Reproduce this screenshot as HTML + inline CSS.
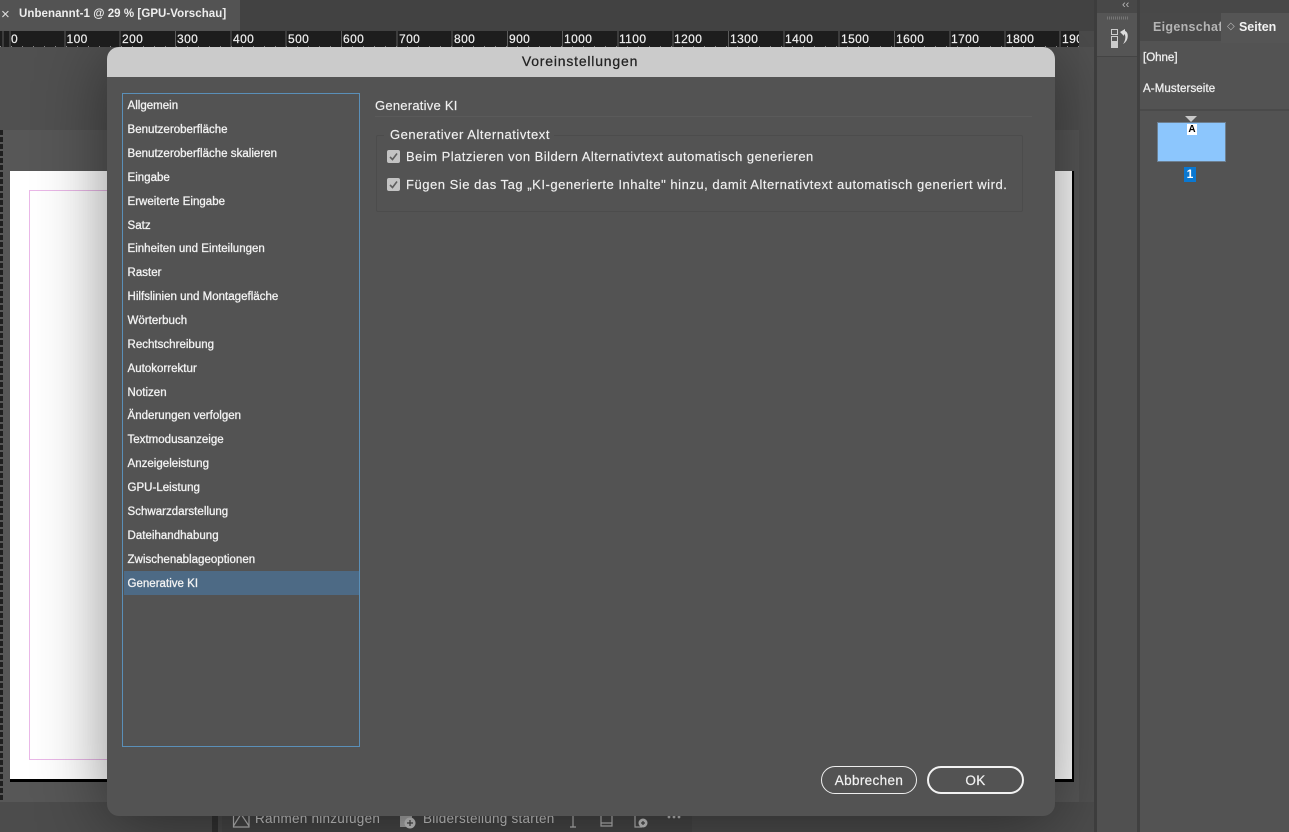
<!DOCTYPE html>
<html><head><meta charset="utf-8"><style>
html,body{margin:0;padding:0;width:1289px;height:832px;overflow:hidden;background:#4b4b4b}
body{position:relative;font-family:"Liberation Sans",sans-serif;color:#f0f0f0;-webkit-font-smoothing:antialiased}
div,span.a{position:absolute;white-space:nowrap}
.li{left:127.5px;font-size:11.5px;line-height:16px;letter-spacing:.02px;color:#f2f2f2;-webkit-text-stroke:.3px #f2f2f2}
.r{top:32px;font-size:12px;line-height:15px;color:#eee;letter-spacing:.4px;-webkit-text-stroke:.2px #eee;z-index:6}
.t{font-size:13px;line-height:18px;letter-spacing:.5px;color:#f0f0f0;-webkit-text-stroke:.15px #f0f0f0}
.cb{left:387px;width:13px;height:13px;background:#c3c3c3;border-radius:2px}
</style></head><body>
<!-- top bar -->
<div style="left:0;top:0;width:240px;height:31px;background:#535353;z-index:5"></div>
<div style="left:240px;top:0;width:855px;height:31px;background:#424242;z-index:5"></div>
<div style="left:1px;top:6px;font-size:15px;line-height:18px;color:#ddd;z-index:6">×</div>
<div style="left:19px;top:6px;font-size:11.5px;line-height:16px;font-weight:bold;letter-spacing:.06px;color:#eee;z-index:6">Unbenannt-1 @ 29 % [GPU-Vorschau]</div>
<!-- ruler -->
<div style="left:0;top:31px;width:1079px;height:16px;background:#1d1d1d;z-index:5"></div>
<svg style="position:absolute;left:0;top:31px;z-index:5" width="1080" height="16"><path d="M3 0V16M10 0V16M65 0V16M120 0V16M175.5 0V16M231 0V16M286 0V16M341.5 0V16M397 0V16M452 0V16M507.5 0V16M562.5 0V16M618 0V16M673 0V16M728.5 0V16M784 0V16M839 0V16M894.5 0V16M950 0V16M1005 0V16M1060 0V16" stroke="#5c5c5c" stroke-width="1"/><path d="M0 15.5H1079" stroke="#8a8a8a" stroke-width="1" stroke-dasharray="1 10"/></svg>
<div class="r" style="left:11px">0</div><div class="r" style="left:66.5px">100</div><div class="r" style="left:122px">200</div><div class="r" style="left:177px">300</div><div class="r" style="left:233px">400</div><div class="r" style="left:288px">500</div><div class="r" style="left:343px">600</div><div class="r" style="left:399px">700</div><div class="r" style="left:454px">800</div><div class="r" style="left:509px">900</div><div class="r" style="left:564px">1000</div><div class="r" style="left:619px">1100</div><div class="r" style="left:674px">1200</div><div class="r" style="left:730px">1300</div><div class="r" style="left:785px">1400</div><div class="r" style="left:841px">1500</div><div class="r" style="left:896px">1600</div><div class="r" style="left:951px">1700</div><div class="r" style="left:1006px">1800</div><div style="left:1062px;top:32px;width:17px;overflow:hidden;font-size:12px;line-height:15px;color:#eee;letter-spacing:.4px;-webkit-text-stroke:.2px #eee;z-index:6">1900</div>
<!-- canvas -->
<div style="left:0;top:47px;width:1095px;height:785px;background:#505050"></div>
<div style="left:0;top:130px;width:1079px;height:672px;background:#575757"></div>
<svg style="position:absolute;left:0;top:130px" width="4" height="672"><path d="M1.5 0V672" stroke="#1f1f1f" stroke-width="3" stroke-dasharray="5 2"/></svg>
<div style="left:1079px;top:47px;width:16px;height:785px;background:#515151"></div>
<div style="left:1094px;top:0;width:3px;height:832px;background:#3d3d3d;z-index:5"></div>
<div style="left:10px;top:171px;width:1064px;height:611px;background:#fff;border-right:2px solid #000;border-bottom:3px solid #000;box-sizing:border-box"></div>
<div style="left:29px;top:190px;width:200px;height:570px;border:1px solid #eab8e8;box-sizing:border-box"></div>
<div style="left:0;top:802px;width:1095px;height:30px;background:#4c4c4c"></div>
<div style="left:212px;top:802px;width:6px;height:30px;background:#333"></div>
<div style="left:222px;top:802px;width:470px;height:30px;background:#474747"></div>
<svg style="position:absolute;left:232px;top:812px" width="460" height="20" fill="none" stroke="#bbb" stroke-width="1.2"><path d="M1.5 1V15H17V1M1.5 14L9 2L17 14"/><path d="M168 4H180V15H168Z" fill="#aaa" stroke="none"/><circle cx="178" cy="11" r="5.5" fill="#ccc" stroke="none"/><path d="M178 8V14M175 11H181" stroke="#444"/><path d="M341 4V15M338 15H344"/><path d="M369 1V14H380V1M369 11H380"/><path d="M403 4V15H410"/><circle cx="411" cy="11" r="4.5" fill="#ccc" stroke="none"/><path d="M411 9V13M409 11H413" stroke="#444"/><circle cx="437" cy="5" r="1.4" fill="#bbb" stroke="none"/><circle cx="442" cy="5" r="1.4" fill="#bbb" stroke="none"/><circle cx="447" cy="5" r="1.4" fill="#bbb" stroke="none"/></svg>
<div style="left:255px;top:810px;font-size:13.5px;line-height:18px;letter-spacing:.25px;color:#ccc">Rahmen hinzufügen</div>
<div style="left:423px;top:810px;font-size:13.5px;line-height:18px;letter-spacing:.25px;color:#ccc">Bilderstellung starten</div>
<!-- dialog -->
<div style="left:107px;top:47px;width:948px;height:769px;background:#535353;border-radius:12px;overflow:hidden;box-shadow:0 8px 70px rgba(0,0,0,.45)">
  <div style="left:0;top:0;width:948px;height:30px;background:#cbcbcb"></div>
  <div style="left:-1px;top:6px;width:948px;text-align:center;font-size:14px;line-height:16px;letter-spacing:.8px;color:#222;-webkit-text-stroke:.25px #222">Voreinstellungen</div>
</div>
<div style="left:122px;top:93px;width:238px;height:654px;border:1.5px solid #5a8fb8;box-sizing:border-box"></div>
<div style="left:124px;top:571px;width:235px;height:24px;background:#4d6a85"></div>
<div class="li" style="top:97.5px">Allgemein</div>
<div class="li" style="top:121.5px">Benutzeroberfläche</div>
<div class="li" style="top:145.5px">Benutzeroberfläche skalieren</div>
<div class="li" style="top:169.5px">Eingabe</div>
<div class="li" style="top:193.5px">Erweiterte Eingabe</div>
<div class="li" style="top:217.5px">Satz</div>
<div class="li" style="top:240.5px">Einheiten und Einteilungen</div>
<div class="li" style="top:264.5px">Raster</div>
<div class="li" style="top:288.5px">Hilfslinien und Montagefläche</div>
<div class="li" style="top:312.5px">Wörterbuch</div>
<div class="li" style="top:336.5px">Rechtschreibung</div>
<div class="li" style="top:360.5px">Autokorrektur</div>
<div class="li" style="top:384.5px">Notizen</div>
<div class="li" style="top:407.5px">Änderungen verfolgen</div>
<div class="li" style="top:431.5px">Textmodusanzeige</div>
<div class="li" style="top:455.5px">Anzeigeleistung</div>
<div class="li" style="top:479.5px">GPU-Leistung</div>
<div class="li" style="top:503.5px">Schwarzdarstellung</div>
<div class="li" style="top:527.5px">Dateihandhabung</div>
<div class="li" style="top:551.5px">Zwischenablageoptionen</div>
<div class="li" style="top:575.5px">Generative KI</div>
<div class="t" style="left:375px;top:97px;letter-spacing:.24px">Generative KI</div>
<div style="left:375px;top:116px;width:657px;height:1px;background:#5a5a5a"></div>
<div style="left:376px;top:135px;width:647px;height:77px;border:1px solid #4c4c4c;box-sizing:border-box;border-radius:2px"></div>
<div style="left:384px;top:128px;width:170px;height:14px;background:#535353"></div>
<div class="t" style="left:390px;top:126px;letter-spacing:.54px">Generativer Alternativtext</div>
<div class="cb" style="top:150px"></div>
<div class="cb" style="top:178px"></div>
<svg style="position:absolute;left:387px;top:150px" width="13" height="41" fill="none" stroke="#5e5e5e" stroke-width="1.6"><path d="M3 7L5.5 9.5L10 3.5M3 35L5.5 37.5L10 31.5"/></svg>
<div class="t" style="left:406px;top:148px;letter-spacing:.47px">Beim Platzieren von Bildern Alternativtext automatisch generieren</div>
<div class="t" style="left:406px;top:176px;letter-spacing:.53px">Fügen Sie das Tag „KI-generierte Inhalte" hinzu, damit Alternativtext automatisch generiert wird.</div>
<!-- buttons -->
<div style="left:821px;top:766px;width:96px;height:28px;border:1px solid #eee;border-radius:14px;box-sizing:border-box;text-align:center;font-size:13.5px;line-height:27px;letter-spacing:.35px;color:#f2f2f2;-webkit-text-stroke:.2px #f2f2f2">Abbrechen</div>
<div style="left:927px;top:766px;width:97px;height:28px;border:2px solid #f2f2f2;border-radius:14px;box-sizing:border-box;text-align:center;font-size:13.5px;line-height:25px;letter-spacing:.4px;color:#f2f2f2;-webkit-text-stroke:.2px #f2f2f2">OK</div>
<!-- right dock -->
<div style="left:1097px;top:0;width:192px;height:832px;background:#505050;z-index:5"></div>
<div style="left:1097px;top:0;width:192px;height:13px;background:#484848;z-index:5"></div>
<div style="left:1122px;top:-1px;font-size:11px;line-height:12px;color:#bbb;z-index:6">‹‹</div>
<div style="left:1097px;top:13px;width:40px;height:43px;background:#555;border-bottom:1px solid #444;z-index:5"></div>
<div style="left:1137px;top:0;width:3px;height:832px;background:#404040;z-index:5"></div>
<svg style="position:absolute;left:1106px;top:15px;z-index:6" width="26" height="34"><path d="M1 3H23" stroke="#777" stroke-width="3" stroke-dasharray="1 1"/><rect x="5.5" y="14.5" width="6" height="5" fill="none" stroke="#ccc"/><rect x="5.5" y="21.5" width="6" height="5" fill="none" stroke="#ccc"/><rect x="5" y="27" width="7" height="6" fill="#ccc"/><path d="M14 17L19 14V16C23 17 23 26 17 29C20 25 20 20 18 19L18 21Z" fill="#ddd"/></svg>
<div style="left:1140px;top:13px;width:149px;height:28px;background:#494949;z-index:5"></div>
<div style="left:1140px;top:41px;width:149px;height:791px;background:#535353;z-index:5"></div>
<div style="left:1221px;top:13px;width:68px;height:30px;background:#555;z-index:5"></div>
<div style="left:1153px;top:19px;width:68px;overflow:hidden;font-size:12.5px;line-height:16px;font-weight:bold;letter-spacing:.3px;color:#b4b4b4;z-index:6">Eigenschaften</div>
<div style="left:1227px;top:19px;font-size:10px;line-height:16px;color:#bbb;z-index:6">◇</div>
<div style="left:1239px;top:19px;font-size:12.5px;line-height:16px;font-weight:bold;letter-spacing:-.05px;color:#f2f2f2;z-index:6">Seiten</div>
<div style="left:1143px;top:50px;font-size:11.5px;line-height:16px;color:#eee;-webkit-text-stroke:.3px #eee;z-index:6">[Ohne]</div>
<div style="left:1143px;top:81px;font-size:11.5px;line-height:16px;letter-spacing:.1px;color:#eee;-webkit-text-stroke:.3px #eee;z-index:6">A-Musterseite</div>
<div style="left:1140px;top:109px;width:149px;height:2px;background:#4a4a4a;z-index:6"></div>
<div style="left:1157px;top:122px;width:69px;height:40px;background:#8cc6fd;border:1px solid #6d7f90;box-sizing:border-box;z-index:6"></div>
<svg style="position:absolute;left:1185px;top:115px;z-index:6" width="13" height="7"><path d="M0 1H12L6 7Z" fill="#c8c8c8"/></svg>
<div style="left:1187px;top:124px;width:10px;height:11px;background:#fff;color:#000;text-align:center;font-size:10px;line-height:11px;font-weight:bold;z-index:7">A</div>
<div style="left:1184px;top:167px;width:12px;height:15px;background:#0a78d2;color:#fff;text-align:center;font-size:12px;line-height:15px;font-weight:bold;z-index:6">1</div>
</body></html>
